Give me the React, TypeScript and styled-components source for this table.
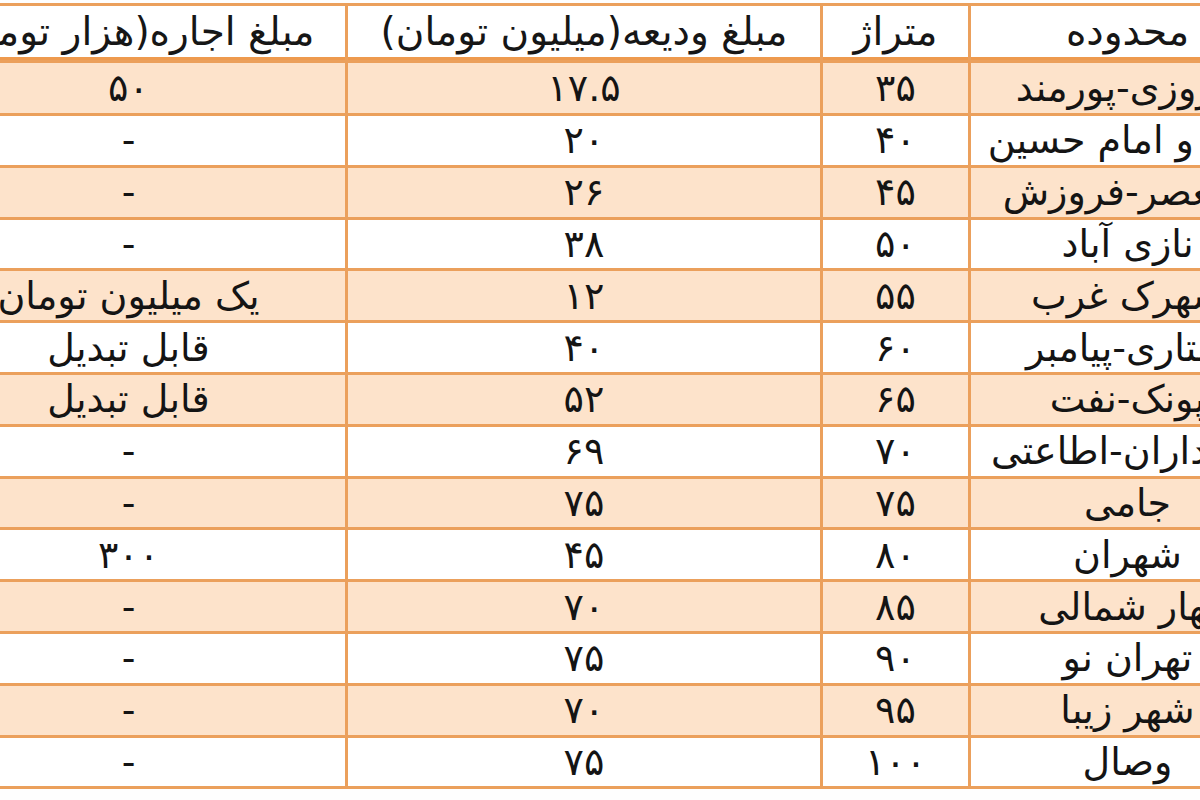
import styled, { createGlobalStyle } from "styled-components";

const GlobalStyle = createGlobalStyle`
  html, body {
    margin: 0;
    padding: 0;
    background: #ffffff;
    overflow: hidden;
  }
`;

type Row = {
  area: string;
  size: string;
  deposit: string;
  rent: string;
};

// ستون‌ها از راست به چپ: محدوده، متراژ، ودیعه، اجاره
const rows: Row[] = [
  { area: "پیروزی-پورمند", size: "۳۵", deposit: "۱۷.۵", rent: "۵۰" },
  { area: "نیرو و امام حسین", size: "۴۰", deposit: "۲۰", rent: "-" },
  { area: "ولیعصر-فروزش", size: "۴۵", deposit: "۲۶", rent: "-" },
  { area: "نازی آباد", size: "۵۰", deposit: "۳۸", rent: "-" },
  { area: "شهرک غرب", size: "۵۵", deposit: "۱۲", rent: "یک میلیون تومان" },
  { area: "ستاری-پیامبر", size: "۶۰", deposit: "۴۰", rent: "قابل تبدیل" },
  { area: "پونک-نفت", size: "۶۵", deposit: "۵۲", rent: "قابل تبدیل" },
  { area: "پاسداران-اطاعتی", size: "۷۰", deposit: "۶۹", rent: "-" },
  { area: "جامی", size: "۷۵", deposit: "۷۵", rent: "-" },
  { area: "شهران", size: "۸۰", deposit: "۴۵", rent: "۳۰۰" },
  { area: "بهار شمالی", size: "۸۵", deposit: "۷۰", rent: "-" },
  { area: "تهران نو", size: "۹۰", deposit: "۷۵", rent: "-" },
  { area: "شهر زیبا", size: "۹۵", deposit: "۷۰", rent: "-" },
  { area: "وصال", size: "۱۰۰", deposit: "۷۵", rent: "-" },
];

const headers = ["محدوده", "متراژ", "مبلغ ودیعه(میلیون تومان)", "مبلغ اجاره(هزار تومان)"];

const Frame = styled.div`
  width: 1200px;
  height: 800px;
  overflow: hidden;
  direction: rtl;
  background: #fefefe;
  padding-top: 3px;
  box-sizing: border-box;
`;

const Table = styled.div`
  width: 1378px;
  margin-right: -87px;
  box-sizing: border-box;
  display: grid;
  grid-template-columns: 313px 145px 472px 433px;
  grid-template-rows: 54px 50px repeat(13, 48.8px);
  gap: 3px;
  padding: 3px;
  background: #eba05c;
`;

const HeaderCell = styled.div`
  background: #ffffff;
  border-bottom: 3px solid #ee9a4e;
  display: flex;
  align-items: center;
  justify-content: center;
  font-family: "DejaVu Sans", "Noto Sans", sans-serif;
  font-size: 39px;
  line-height: 1;
  color: #161616;
  white-space: nowrap;
`;

const Cell = styled.div<{ $shaded: boolean; $numeric?: boolean }>`
  background: ${(p) => (p.$shaded ? "#fde3cb" : "#ffffff")};
  display: flex;
  align-items: center;
  justify-content: center;
  font-family: "DejaVu Sans", "Noto Sans", sans-serif;
  font-size: ${(p) => (p.$numeric ? "38px" : "38px")};
  line-height: 1;
  color: #141414;
  white-space: nowrap;
`;

const App = () => {
  return (
    <>
      <GlobalStyle />
      <Frame>
        <Table>
          {headers.map((h) => (
            <HeaderCell key={h}>{h}</HeaderCell>
          ))}
          {rows.map((r, i) => {
            const shaded = i % 2 === 0;
            return [
              <Cell key={`a${i}`} $shaded={shaded}>{r.area}</Cell>,
              <Cell key={`s${i}`} $shaded={shaded} $numeric>{r.size}</Cell>,
              <Cell key={`d${i}`} $shaded={shaded} $numeric>{r.deposit}</Cell>,
              <Cell key={`r${i}`} $shaded={shaded}>{r.rent}</Cell>,
            ];
          })}
        </Table>
      </Frame>
    </>
  );
};

export default App;
